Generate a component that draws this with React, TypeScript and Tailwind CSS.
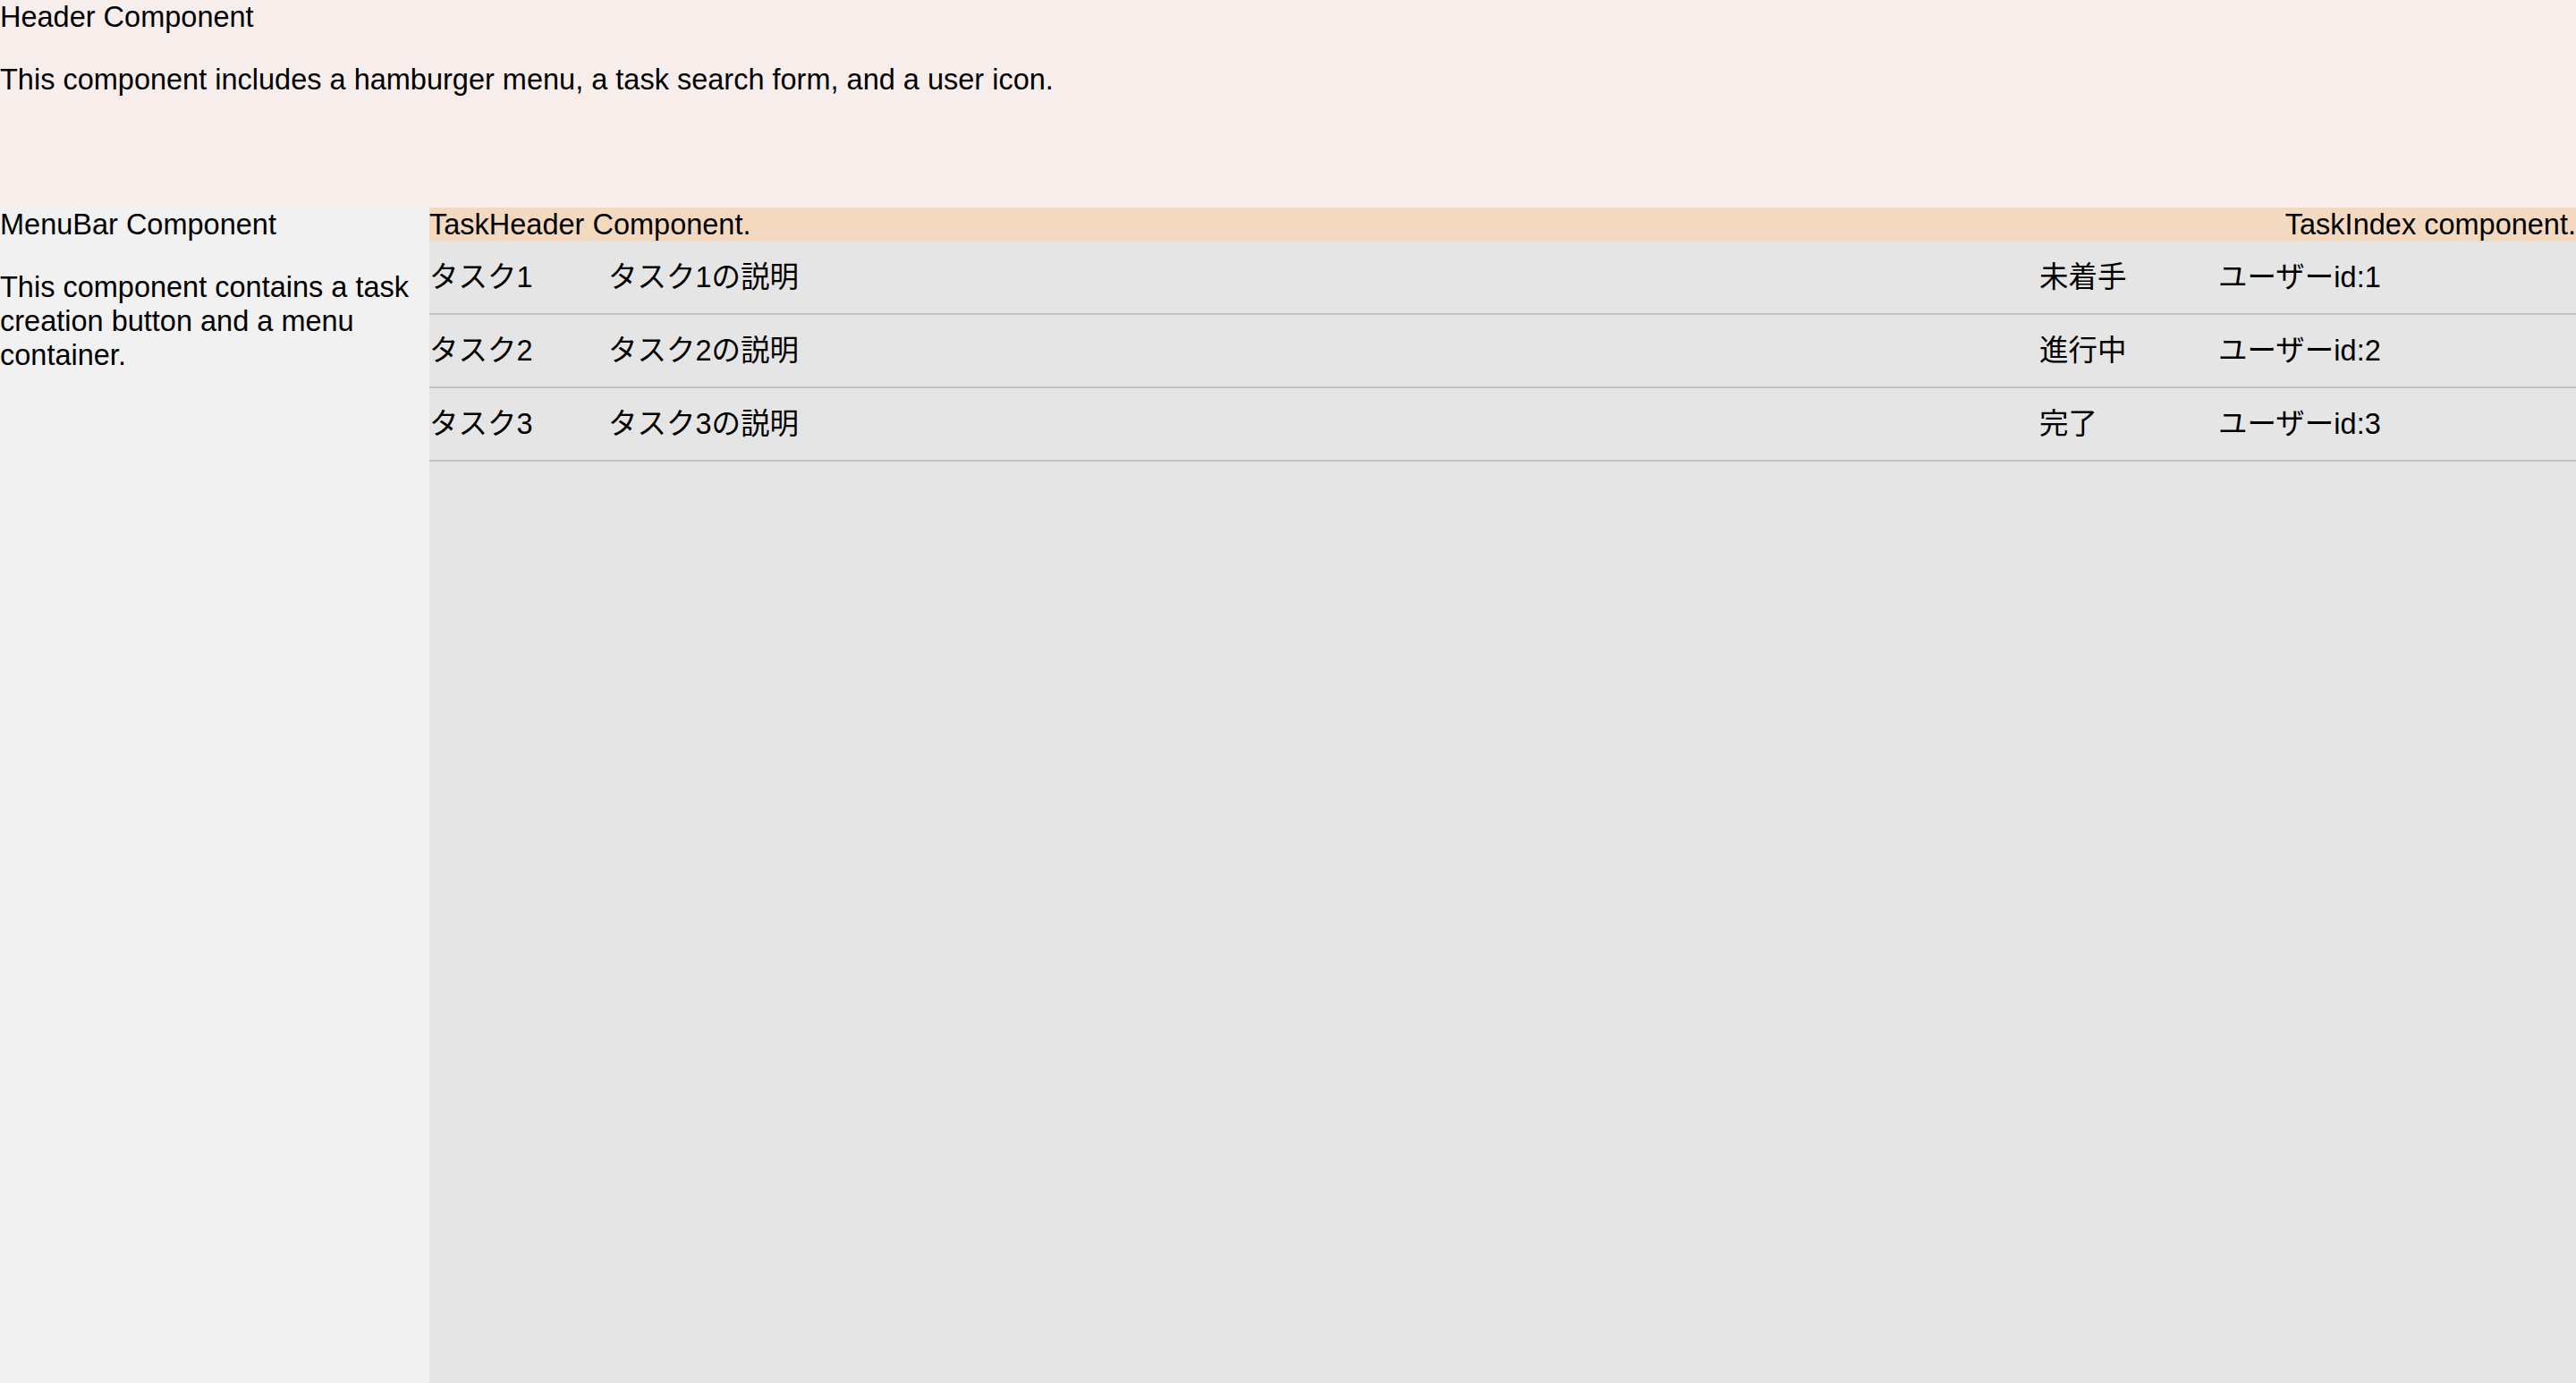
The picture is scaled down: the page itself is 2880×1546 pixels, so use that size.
import React from "react";

const tasks = [
  { name: "タスク1", desc: "タスク1の説明", status: "未着手", user: "ユーザーid:1" },
  { name: "タスク2", desc: "タスク2の説明", status: "進行中", user: "ユーザーid:2" },
  { name: "タスク3", desc: "タスク3の説明", status: "完了", user: "ユーザーid:3" },
];

export default function App() {
  return (
    <div
      className="flex h-[1546px] w-[2880px] flex-col overflow-hidden text-[32.5px] leading-[38px] text-black"
      style={{ fontFamily: '"Liberation Sans", Arial, "Noto Sans CJK JP", sans-serif' }}
    >
      <header className="h-[232px] shrink-0 bg-[#f7eeec]">
        <div>Header Component</div>
        <p className="mt-[32px]">This component includes a hamburger menu, a task search form, and a user icon.</p>
      </header>
      <div className="flex flex-1">
        <aside className="w-[480px] shrink-0 bg-[#f1f1f1]">
          <div>MenuBar Component</div>
          <p className="mt-[32px]">This component contains a task creation button and a menu container.</p>
        </aside>
        <main className="flex-1 bg-[#e5e5e5]">
          <div className="flex h-[38px] items-center justify-between bg-[#f4d9c1]">
            <span>TaskHeader Component.</span>
            <span>TaskIndex component.</span>
          </div>
          {tasks.map((t) => (
            <div key={t.name} className="flex h-[82px] items-center border-b-2 border-[#c4c4c4]">
              <div className="w-[200px] shrink-0">{t.name}</div>
              <div className="w-[1600px] shrink-0">{t.desc}</div>
              <div className="w-[200px] shrink-0">{t.status}</div>
              <div className="flex-1">{t.user}</div>
            </div>
          ))}
        </main>
      </div>
    </div>
  );
}
